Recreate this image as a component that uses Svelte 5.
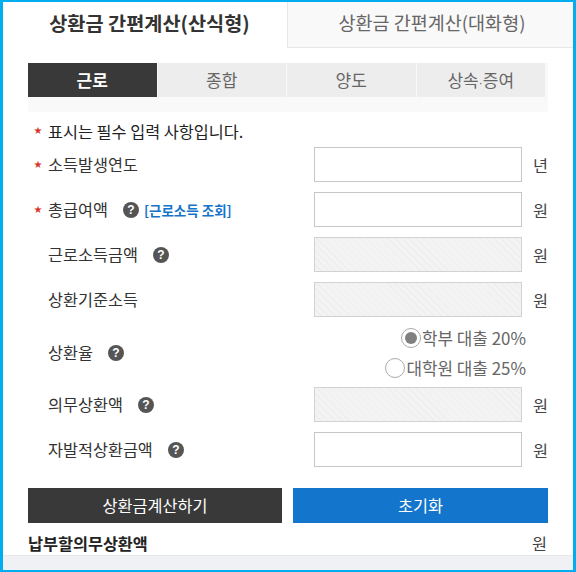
<script>
  const rows1 = [
    { label: '소득발생연도', req: true, unit: '년' },
    { label: '총급여액', req: true, help: true, link: '[근로소득 조회]', unit: '원' },
    { label: '근로소득금액', help: true, off: true, unit: '원' },
    { label: '상환기준소득', off: true, unit: '원' }
  ];
  const rows2 = [
    { label: '의무상환액', help: true, off: true, unit: '원' },
    { label: '자발적상환금액', help: true, unit: '원' }
  ];
</script>

{#snippet row(r)}
  <div class="row">
    <div class="label">
      {#if r.req}<span class="star">★</span>{/if}
      <span>{r.label}</span>
      {#if r.help}<span class="help">?</span>{/if}
      {#if r.link}<span class="link">{r.link}</span>{/if}
    </div>
    <div class="field" class:off={r.off}></div>
    <span class="unit">{r.unit}</span>
  </div>
{/snippet}

<div class="frame">
  <div class="view">
    <div class="tabs">
      <div class="tab on">상환금 간편계산(산식형)</div>
      <div class="tab">상환금 간편계산(대화형)</div>
    </div>
    <div class="body">
      <div class="subwrap">
        <div class="subs">
          <div class="sub active">근로</div>
          <div class="sub">종합</div>
          <div class="sub">양도</div>
          <div class="sub">상속<span class="mid">·</span>증여</div>
        </div>
      </div>
      <p class="note"><span class="star">★</span>표시는 필수 입력 사항입니다.</p>
      <div class="rows">
        {#each rows1 as r}{@render row(r)}{/each}
      </div>
      <div class="rate">
        <div class="label rate-label"><span>상환율</span><span class="help">?</span></div>
        <div class="radios">
          <div class="radio"><span class="dot sel"></span>학부 대출 20%</div>
          <div class="radio"><span class="dot"></span>대학원 대출 25%</div>
        </div>
      </div>
      <div class="rows">
        {#each rows2 as r}{@render row(r)}{/each}
      </div>
      <div class="btns">
        <div class="btn dark">상환금계산하기</div>
        <div class="btn blue">초기화</div>
      </div>
      <div class="result">
        <strong>납부할의무상환액</strong>
        <span class="unit">원</span>
      </div>
    </div>
  </div>
  <div class="strip"></div>
</div>

<style>
  :global(body) { margin: 0; }
  .frame {
    box-sizing: border-box;
    width: 576px;
    height: 572px;
    border: solid #00aeef;
    border-width: 2px 3px 2px 3px;
    display: flex;
    flex-direction: column;
    background: #fff;
    font-family: "Noto Sans CJK KR", "Noto Sans", sans-serif;
    font-size: 16.3px;
    color: #333;
    overflow: hidden;
  }
  .view { height: 553px; overflow: hidden; flex: none; }
  .strip { flex: 1; background: #f0f1f4; border-top: 1px solid #e6e6e9; }
  .tabs { display: flex; height: 46px; }
  .tab {
    box-sizing: border-box;
    text-align: center;
    line-height: 41px;
    font-size: 18.5px;
    color: #666;
    background: #f9f9f9;
    border-bottom: 1px solid #e6e6e6;
    border-left: 1px solid #e6e6e6;
    flex: 1;
    padding-left: 3px;
  }
  .tab.on {
    flex: none;
    width: 284px;
    padding-left: 9px;
    background: #fff;
    color: #333;
    font-size: 19.7px;
    font-weight: 700;
    border: 0;
  }
  .body { padding: 15px 25px 0 25px; }
  .subwrap { background: #f9f9f9; height: 49px; width: 520px; }
  .subs { display: flex; gap: 1px; width: 517px; }
  .sub {
    flex: 1;
    height: 34px;
    line-height: 33px;
    text-align: center;
    background: #ededed;
    color: #666;
    font-size: 17px;
  }
  .mid { font-family: "Liberation Sans", sans-serif; font-size: 12px; }
  .sub.active { background: #393939; color: #fff; font-weight: 700; }
  .note {
    margin: 8px 0 0;
    height: 27px;
    line-height: 22px;
    color: #222;
    padding-left: 7px;
    display: flex;
  }
  .note .star { margin-right: 7px; }
  .star {
    color: #d8352a;
    font-family: "DejaVu Sans", sans-serif;
    font-size: 10px;
    line-height: 22px;
    height: 22px;
    width: 6px;
    display: flex;
    justify-content: center;
  }
  .rows { display: flex; flex-direction: column; gap: 10px; }
  .row { display: flex; align-items: center; height: 35px; }
  .label {
    flex: 1;
    display: flex;
    align-items: center;
    padding-left: 20px;
    padding-bottom: 2px;
    position: relative;
    color: #333;
  }
  .rate-label { padding-bottom: 6px; }
  .label .star { position: absolute; left: 7px; top: 50%; margin-top: -11px; }
  .help {
    width: 16px;
    height: 16px;
    border-radius: 50%;
    background: #555;
    color: #fff;
    font-size: 12px;
    font-weight: 700;
    line-height: 16px;
    text-align: center;
    margin: 2px 0 0 15px;
    font-family: "Liberation Sans", sans-serif;
  }
  .link {
    color: #1574c9;
    font-weight: 700;
    font-size: 13.5px;
    margin: 2px 0 0 5px;
  }
  .field {
    box-sizing: border-box;
    width: 208px;
    height: 35px;
    border: 1px solid #c6c6ca;
    background: #fff;
  }
  .field.off {
    border-color: #d2d2d2;
    background: repeating-linear-gradient(45deg, #f3f3f3 0 4px, #eeeeee 4px 5px);
  }
  .unit { width: 26px; text-align: right; color: #444; flex: none; }
  .rate {
    display: flex;
    align-items: center;
    height: 54px;
    margin: 11px 0 5px;
  }
  .radios {
    align-self: flex-start;
    display: flex;
    flex-direction: column;
    align-items: flex-end;
    gap: 10px;
    padding-right: 22px;
  }
  .radio {
    display: flex;
    align-items: center;
    height: 20px;
    line-height: 18px;
    color: #666;
    font-size: 16.9px;
  }
  .dot {
    box-sizing: border-box;
    width: 20px;
    height: 20px;
    border: 1px solid #aaa;
    border-radius: 50%;
    margin-right: 1px;
    background: #fff;
    display: grid;
    place-items: center;
  }
  .dot.sel::after {
    content: "";
    width: 12px;
    height: 12px;
    border-radius: 50%;
    background: #808080;
  }
  .btns { display: flex; gap: 11px; width: 520px; margin-top: 21px; }
  .btn {
    height: 35px;
    line-height: 34px;
    text-align: center;
    color: #fff;
    font-size: 16.3px;
  }
  .dark { background: #393939; width: 254px; flex: none; }
  .blue { background: #1475cc; flex: 1; }
  .result {
    display: flex;
    justify-content: space-between;
    margin-top: 9px;
    line-height: 22px;
    width: 519px;
  }
  .result strong { color: #222; font-weight: 700; }
</style>
